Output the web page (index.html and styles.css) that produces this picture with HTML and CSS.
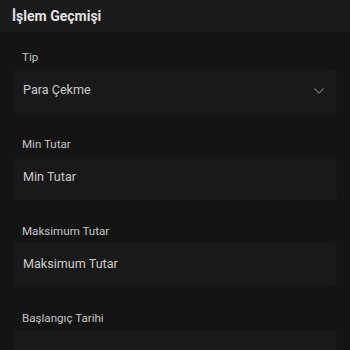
FILE: index.html
```html
<!DOCTYPE html>
<html lang="tr">
<head>
<meta charset="utf-8">
<link rel="stylesheet" href="styles.css">
</head>
<body>
<div class="page">
  <header class="bar"><h1 class="title">İşlem Geçmişi</h1></header>
  <main class="form">
    <div class="field">
      <label class="label">Tip</label>
      <div class="input select">
        <span class="value">Para Çekme</span>
        <svg class="chev" width="12" height="8" viewBox="0 0 12 8"><path d="M1.5 1.5 L6 6 L10.5 1.5" fill="none" stroke="#6a6a6a" stroke-width="1.4"/></svg>
      </div>
    </div>
    <div class="field">
      <label class="label">Min Tutar</label>
      <div class="input"><span class="value">Min Tutar</span></div>
    </div>
    <div class="field">
      <label class="label">Maksimum Tutar</label>
      <div class="input"><span class="value">Maksimum Tutar</span></div>
    </div>
    <div class="field">
      <label class="label">Başlangıç Tarihi</label>
      <div class="input"><span class="value"></span></div>
    </div>
  </main>
</div>
</body>
</html>
```
FILE: styles.css
```css
html, body {
  margin: 0;
  padding: 0;
  background: #141414;
  height: 100%;
  overflow: hidden;
}
.page {
  font-family: Roboto, "Noto Sans", sans-serif;
  color: #d0d0d0;
}
.bar {
  height: 32px;
  background: #1a1a1a;
  display: flex;
  align-items: center;
  padding: 0 12px;
}
.title {
  margin: 0;
  font-size: 14px;
  font-weight: 700;
  color: #e2e2e2;
}
.form {
  padding: 17px 13px 0 14px;
  display: flex;
  flex-direction: column;
  gap: 23px;
}
.field {
  display: flex;
  flex-direction: column;
  gap: 4px;
}
.label {
  font-size: 11.6px;
  color: #c4c4c4;
  padding-left: 8px;
  line-height: 16px;
}
.input {
  height: 44px;
  background: #191919;
  border-radius: 3px;
  display: flex;
  align-items: center;
  justify-content: space-between;
  padding: 0 12px 0 9px;
}
.value {
  font-size: 12.6px;
  color: #cbcbcb;
  line-height: 16px;
  margin-top: -2px;
}
.chev { display: block; }
```
